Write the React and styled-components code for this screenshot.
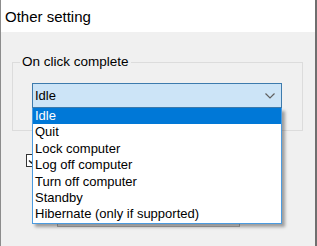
import React from "react";
import styled, { createGlobalStyle } from "styled-components";

const Global = createGlobalStyle`
  html, body { margin: 0; padding: 0; background: #f0f0f0; }
  * { box-sizing: border-box; }
`;

const Window = styled.div`
  width: 317px;
  height: 246px;
  overflow: hidden;
  display: flex;
  flex-direction: column;
  background: #f0f0f0;
  border-left: 1px solid #8c8c8c;
  border-right: 2px solid #6f6f6f;
  font-family: "Liberation Sans", Arial, sans-serif;
  color: #000;
`;

const TitleBar = styled.div`
  height: 32px;
  flex: none;
  background: #fff;
  padding: 8px 0 0 4px;
  font-size: 15px;
  line-height: 17px;
`;

const Body = styled.div`
  padding: 22px 12px 0 11px;
  display: flex;
  flex-direction: column;
`;

const GroupBox = styled.fieldset`
  margin: 0;
  width: 291px;
  padding: 0 0 22px;
  border: 1px solid #dcdcdc;
  min-width: 0;
`;

const Caption = styled.legend`
  margin-left: 7px;
  padding: 0 2px;
  font-size: 13.5px;
  line-height: 16px;
`;

const ComboWrap = styled.div`
  position: relative;
  margin: 13px 0 0 19px;
  width: 250px;
`;

const Combo = styled.div`
  height: 25px;
  display: flex;
  align-items: center;
  justify-content: space-between;
  padding: 0 6px 0 2px;
  background: #cce4f7;
  border: 1px solid #3d7bad;
  font-size: 13px;
`;

const DropList = styled.ul`
  position: absolute;
  z-index: 5;
  top: 100%;
  left: 0;
  width: 250px;
  margin: 0;
  padding: 0;
  list-style: none;
  background: #fff;
  border: 1px solid #4b9be0;
  border-top: none;
  box-shadow: 3px 3px 3px rgba(0, 0, 0, 0.35);
`;

const Option = styled.li`
  height: 16.4px;
  line-height: 16.4px;
  padding-left: 2px;
  font-size: 13px;
  white-space: nowrap;
  background: ${(p) => (p.$selected ? "#0078d7" : "transparent")};
  color: ${(p) => (p.$selected ? "#fff" : "#000")};
`;

const CheckRow = styled.div`
  margin: 23px 0 0 14px;
  display: flex;
`;

const CheckBox = styled.div`
  width: 13px;
  height: 13px;
  border: 1px solid #333;
  background: #fff;
  display: flex;
  align-items: center;
  justify-content: center;
`;

const PushButton = styled.div`
  margin: 37px 0 0 45px;
  width: 183px;
  height: 23px;
  background: #e1e1e1;
  border: 1px solid #adadad;
`;

const Chevron = () => (
  <svg width="10" height="6" viewBox="0 0 10 6">
    <path d="M0.5 0.5 L5 5 L9.5 0.5" fill="none" stroke="#606060" strokeWidth="1.2" />
  </svg>
);

const options = [
  "Idle",
  "Quit",
  "Lock computer",
  "Log off computer",
  "Turn off computer",
  "Standby",
  "Hibernate (only if supported)",
];

export default function App() {
  return (
    <>
      <Global />
      <Window>
        <TitleBar>Other setting</TitleBar>
        <Body>
          <GroupBox>
            <Caption>On click complete</Caption>
            <ComboWrap>
              <Combo>
                <span>Idle</span>
                <Chevron />
              </Combo>
              <DropList>
                {options.map((o, i) => (
                  <Option key={o} $selected={i === 0}>
                    {o}
                  </Option>
                ))}
              </DropList>
            </ComboWrap>
          </GroupBox>
          <CheckRow>
            <CheckBox>
              <svg width="11" height="11" viewBox="0 0 11 11">
                <path d="M2 5.5 L4.5 8 L9 2.5" fill="none" stroke="#222" strokeWidth="1.4" />
              </svg>
            </CheckBox>
          </CheckRow>
          <PushButton />
        </Body>
      </Window>
    </>
  );
}
